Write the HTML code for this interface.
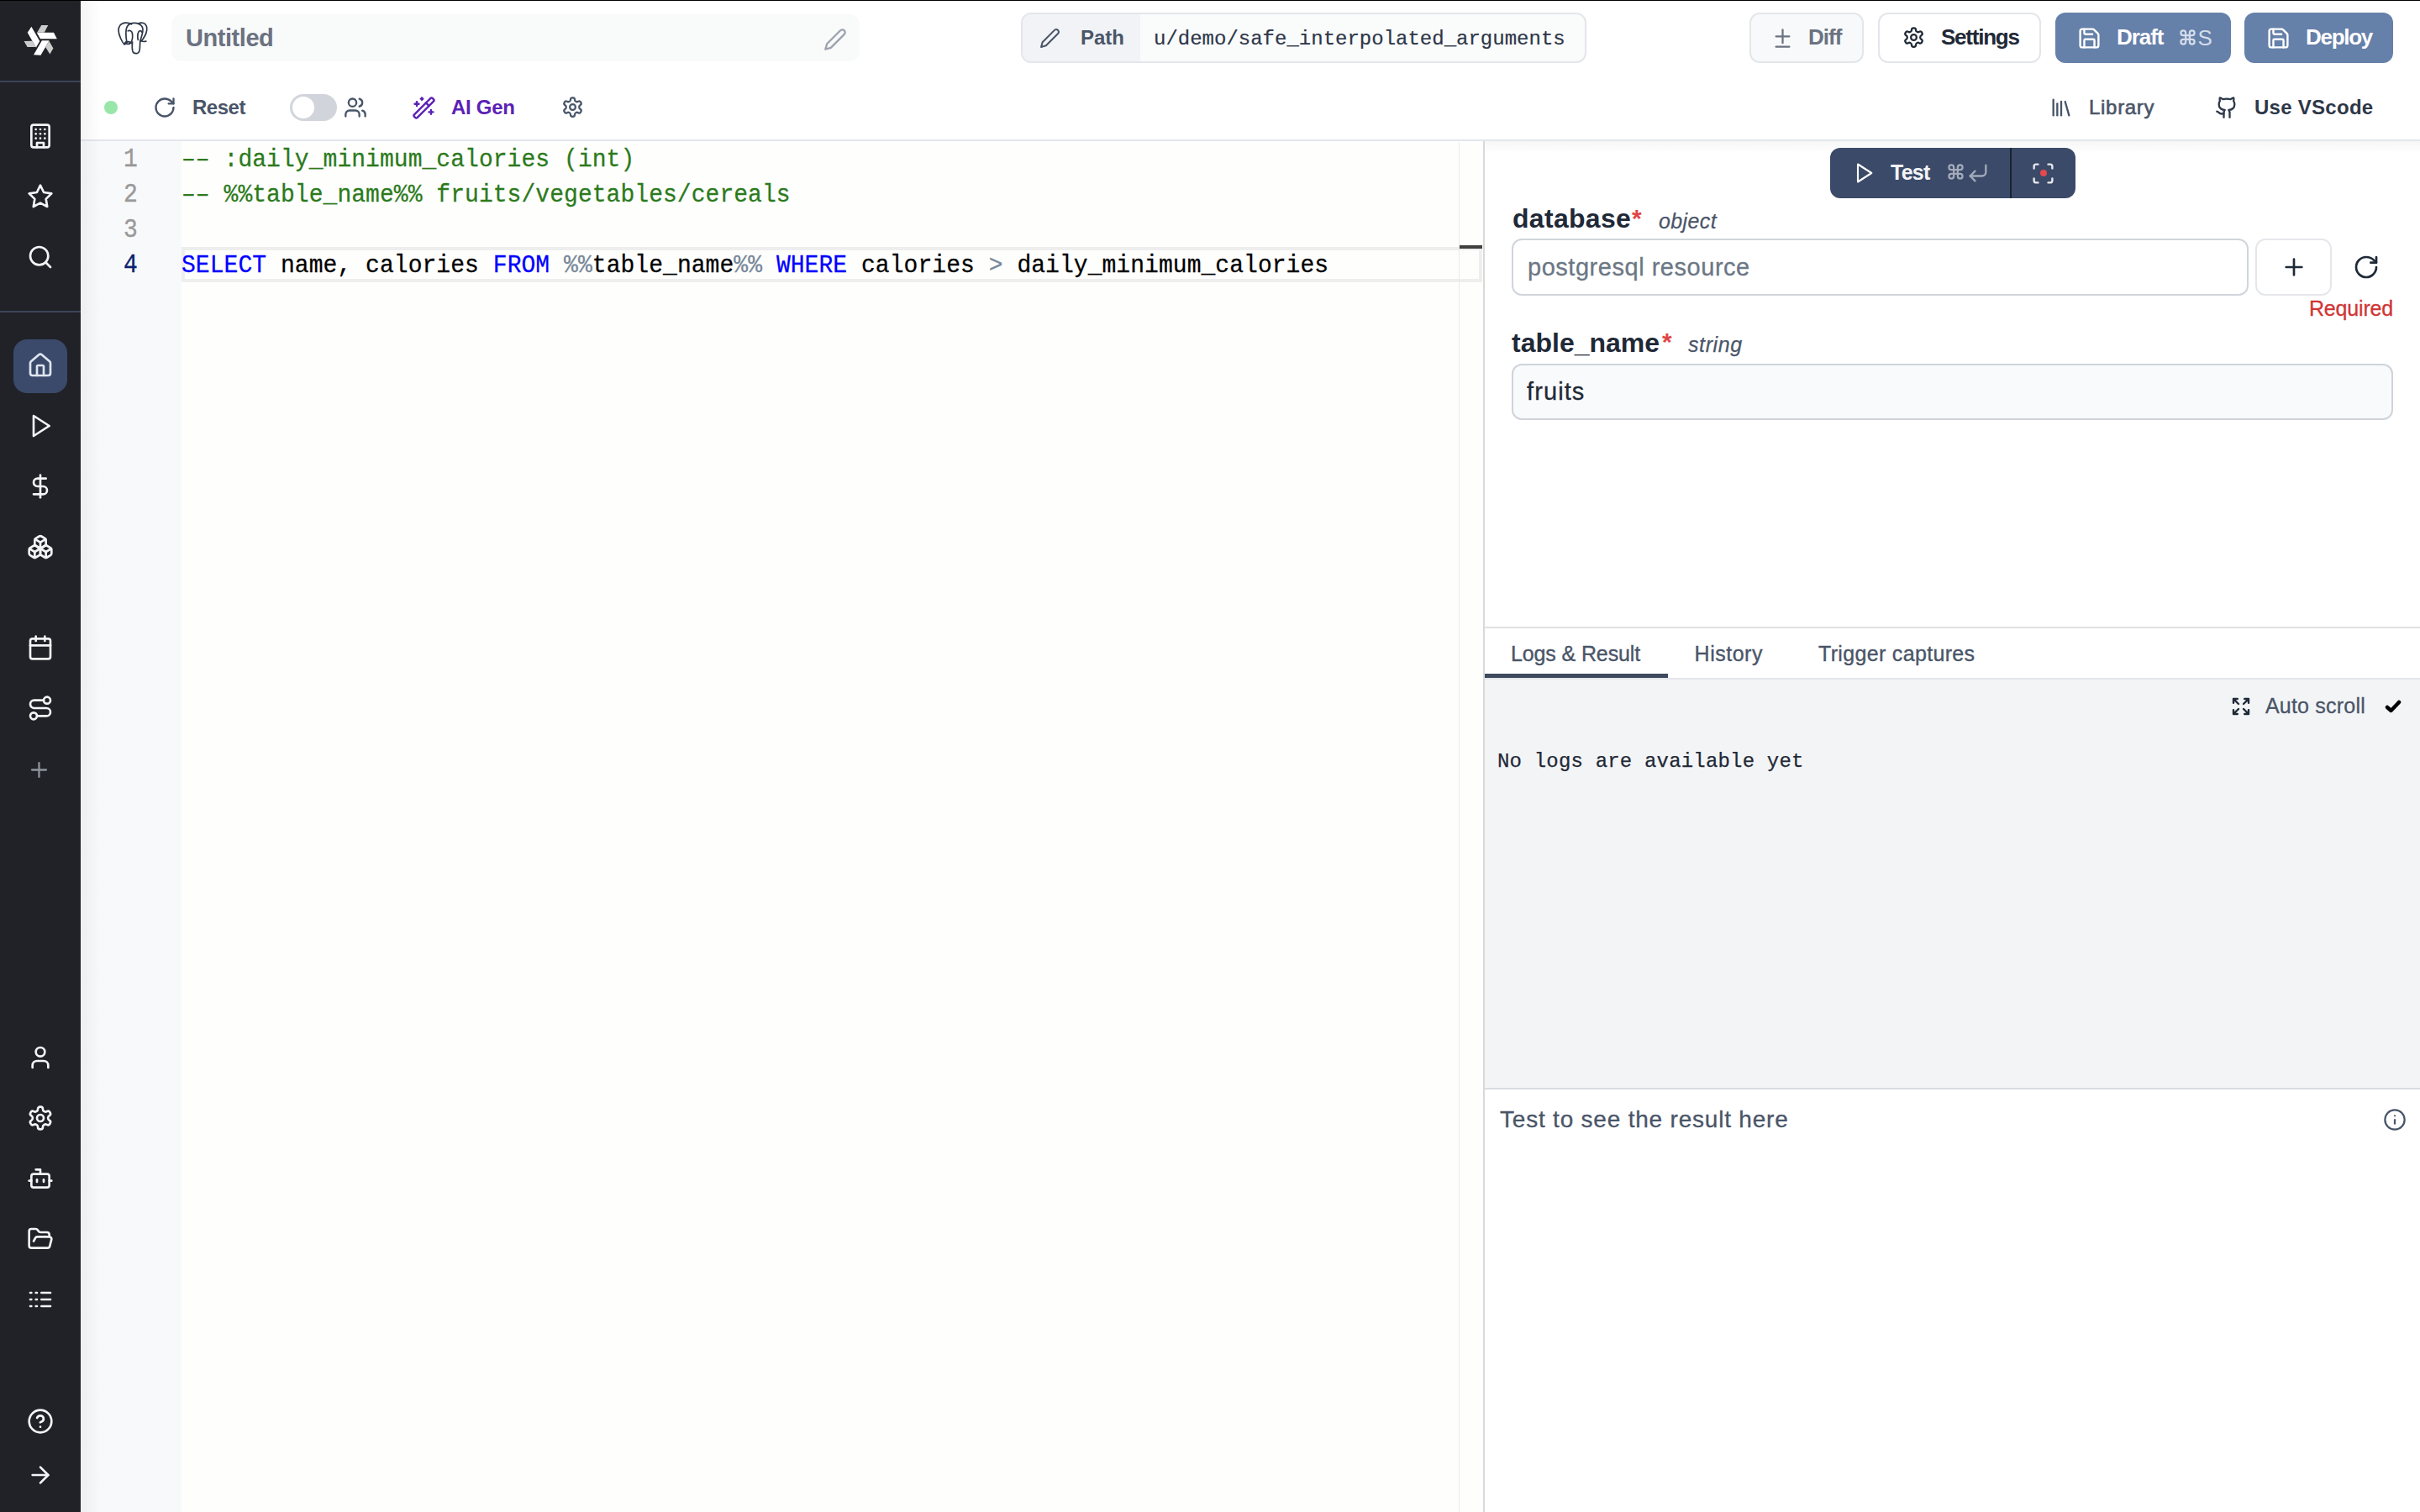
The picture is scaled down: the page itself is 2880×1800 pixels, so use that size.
<!DOCTYPE html>
<html>
<head>
<meta charset="utf-8">
<style>
html,body{margin:0;padding:0;}
body{width:2880px;height:1800px;overflow:hidden;position:relative;background:#ffffff;font-family:"Liberation Sans",sans-serif;}
.a{position:absolute;}
.ic{position:absolute;fill:none;stroke-linecap:round;stroke-linejoin:round;}
.sb .ic{stroke:#f3f4f6;stroke-width:2;}
.t{position:absolute;white-space:nowrap;line-height:1;}
.mono{font-family:"Liberation Mono",monospace;}
</style>
</head>
<body>
<!-- top line -->
<div class="a" style="left:0;top:0;width:2880px;height:1px;background:#000;z-index:10"></div>

<!-- SIDEBAR -->
<div class="a sb" id="sidebar" style="left:0;top:0;width:96px;height:1800px;background:#202227;">
<svg class="a" style="left:0;top:0" width="96" height="96" viewBox="0 0 96 96"><g transform="translate(48.4 47.8)"><g id="blade"><polygon fill="#ffffff" points="-4.7,-9.1 15.6,-9.1 19.4,-1.5 -0.4,-1.5"/><polygon fill="#cccccc" points="-4.2,-9.1 0.8,-17.8 8.9,-17.8 4.3,-9.1"/></g><use href="#blade" transform="rotate(120)"/><use href="#blade" transform="rotate(240)"/></g></svg>
<div class="a" style="left:0;top:96px;width:96px;height:2px;background:#3b4558"></div>
<div class="a" style="left:0;top:370px;width:96px;height:2px;background:#3b4558"></div>
<div class="a" style="left:16px;top:404px;width:64px;height:64px;border-radius:16px;background:#3b4a6b"></div>
<svg class="ic" style="left:32px;top:146px;" width="32" height="32" viewBox="0 0 24 24"><rect width="16" height="20" x="4" y="2" rx="2" ry="2"/><path d="M9 22v-4h6v4"/><path d="M8 6h.01"/><path d="M16 6h.01"/><path d="M12 6h.01"/><path d="M12 10h.01"/><path d="M12 14h.01"/><path d="M16 10h.01"/><path d="M16 14h.01"/><path d="M8 10h.01"/><path d="M8 14h.01"/></svg>
<svg class="ic" style="left:32px;top:218px;" width="32" height="32" viewBox="0 0 24 24"><polygon points="12 2 15.09 8.26 22 9.27 17 14.14 18.18 21.02 12 17.77 5.82 21.02 7 14.14 2 9.27 8.91 8.26 12 2"/></svg>
<svg class="ic" style="left:32px;top:290px;" width="32" height="32" viewBox="0 0 24 24"><circle cx="11" cy="11" r="8"/><path d="m21 21-4.3-4.3"/></svg>
<svg class="ic" style="left:32px;top:419px;stroke:#dfe5ef;" width="32" height="32" viewBox="0 0 24 24"><path d="M15 21v-8a1 1 0 0 0-1-1h-4a1 1 0 0 0-1 1v8"/><path d="M3 10a2 2 0 0 1 .709-1.528l7-5.999a2 2 0 0 1 2.582 0l7 5.999A2 2 0 0 1 21 10v9a2 2 0 0 1-2 2H5a2 2 0 0 1-2-2z"/></svg>
<svg class="ic" style="left:32px;top:491px;" width="32" height="32" viewBox="0 0 24 24"><polygon points="6 3 20 12 6 21 6 3"/></svg>
<svg class="ic" style="left:32px;top:563px;" width="32" height="32" viewBox="0 0 24 24"><line x1="12" x2="12" y1="2" y2="22"/><path d="M17 5H9.5a3.5 3.5 0 0 0 0 7h5a3.5 3.5 0 0 1 0 7H6"/></svg>
<svg class="ic" style="left:32px;top:635px;" width="32" height="32" viewBox="0 0 24 24"><path d="M2.97 12.92A2 2 0 0 0 2 14.63v3.24a2 2 0 0 0 .97 1.71l3 1.8a2 2 0 0 0 2.06 0L12 19v-5.5l-5-3-4.03 2.42Z"/><path d="m7 16.5-4.74-2.85"/><path d="m7 16.5 5-3"/><path d="M7 16.5v5.17"/><path d="M12 13.5V19l3.97 2.38a2 2 0 0 0 2.06 0l3-1.8a2 2 0 0 0 .97-1.71v-3.24a2 2 0 0 0-.97-1.71L17 10.5l-5 3Z"/><path d="m17 16.5-5-3"/><path d="m17 16.5 4.74-2.850"/><path d="M17 16.5v5.17"/><path d="M7.97 4.42A2 2 0 0 0 7 6.13v4.37l5 3 5-3V6.13a2 2 0 0 0-.97-1.710l-3-1.8a2 2 0 0 0-2.06 0l-3 1.8Z"/><path d="M12 8 7.26 5.15"/><path d="m12 8 4.74-2.85"/><path d="M12 13.5V8"/></svg>
<svg class="ic" style="left:32px;top:755px;" width="32" height="32" viewBox="0 0 24 24"><path d="M8 2v4"/><path d="M16 2v4"/><rect width="18" height="18" x="3" y="4" rx="2"/><path d="M3 10h18"/></svg>
<svg class="ic" style="left:32px;top:827px;" width="32" height="32" viewBox="0 0 24 24"><circle cx="6" cy="19" r="3"/><path d="M9 19h8.5a3.5 3.5 0 0 0 0-7h-11a3.5 3.5 0 0 1 0-7H15"/><circle cx="18" cy="5" r="3"/></svg>
<svg class="ic" style="left:31.5px;top:901.5px;stroke:#8e949c;stroke-width:1.9" width="29" height="29" viewBox="0 0 24 24"><path d="M5 12h14"/><path d="M12 5v14"/></svg>
<svg class="ic" style="left:32px;top:1243px;" width="32" height="32" viewBox="0 0 24 24"><path d="M19 21v-2a4 4 0 0 0-4-4H9a4 4 0 0 0-4 4v2"/><circle cx="12" cy="7" r="4"/></svg>
<svg class="ic" style="left:32px;top:1315px;" width="32" height="32" viewBox="0 0 24 24"><path d="M12.22 2h-.44a2 2 0 0 0-2 2v.18a2 2 0 0 1-1 1.73l-.43.25a2 2 0 0 1-2 0l-.15-.08a2 2 0 0 0-2.73.73l-.22.38a2 2 0 0 0 .73 2.73l.15.1a2 2 0 0 1 1 1.72v.51a2 2 0 0 1-1 1.74l-.15.09a2 2 0 0 0-.73 2.73l.22.38a2 2 0 0 0 2.73.73l.15-.08a2 2 0 0 1 2 0l.43.25a2 2 0 0 1 1 1.73V20a2 2 0 0 0 2 2h.44a2 2 0 0 0 2-2v-.18a2 2 0 0 1 1-1.73l.43-.25a2 2 0 0 1 2 0l.15.08a2 2 0 0 0 2.73-.73l.22-.39a2 2 0 0 0-.73-2.73l-.15-.08a2 2 0 0 1-1-1.74v-.5a2 2 0 0 1 1-1.74l.15-.09a2 2 0 0 0 .73-2.73l-.22-.38a2 2 0 0 0-2.73-.73l-.15.08a2 2 0 0 1-2 0l-.43-.25a2 2 0 0 1-1-1.73V4a2 2 0 0 0-2-2z"/><circle cx="12" cy="12" r="3"/></svg>
<svg class="ic" style="left:32px;top:1387px;" width="32" height="32" viewBox="0 0 24 24"><path d="M12 8V4H8"/><rect width="16" height="12" x="4" y="8" rx="2"/><path d="M2 14h2"/><path d="M20 14h2"/><path d="M15 13v2"/><path d="M9 13v2"/></svg>
<svg class="ic" style="left:32px;top:1459px;" width="32" height="32" viewBox="0 0 24 24"><path d="m6 14 1.5-2.9A2 2 0 0 1 9.24 10H20a2 2 0 0 1 1.94 2.5l-1.54 6a2 2 0 0 1-1.950 1.5H4a2 2 0 0 1-2-2V5a2 2 0 0 1 2-2h3.9a2 2 0 0 1 1.69.9l.81 1.2a2 2 0 0 0 1.67.9H18a2 2 0 0 1 2 2v2"/></svg>
<svg class="ic" style="left:32px;top:1531px;" width="32" height="32" viewBox="0 0 24 24"><path d="M13 12h8"/><path d="M13 18h8"/><path d="M13 6h8"/><path d="M3 12h1"/><path d="M3 18h1"/><path d="M3 6h1"/><path d="M8 12h1"/><path d="M8 18h1"/><path d="M8 6h1"/></svg>
<svg class="ic" style="left:32px;top:1676px;" width="32" height="32" viewBox="0 0 24 24"><circle cx="12" cy="12" r="10"/><path d="M9.09 9a3 3 0 0 1 5.83 1c0 2-3 3-3 3"/><path d="M12 17h.01"/></svg>
<svg class="ic" style="left:32px;top:1740px;" width="32" height="32" viewBox="0 0 24 24"><path d="M5 12h14"/><path d="m12 5 7 7-7 7"/></svg>
</div>

<!-- main shadow -->
<div class="a" style="left:96px;top:1px;width:24px;height:1799px;background:linear-gradient(to right,rgba(0,0,0,0.045),rgba(0,0,0,0));z-index:3"></div>

<!-- HEADER -->

<div id="header">
<!-- elephant -->
<svg id="i_eleph" class="ic" style="left:138px;top:24px;stroke:#2d3748;stroke-width:1.7" width="40" height="42" viewBox="138 24 40 42">
 <path d="M156.5 28.8 C153 26.5 146 26.2 143 30 C140.3 33.5 141 40 143.5 45.5 C145 49 146.5 51.5 148 52.8 C149.5 52.5 150.8 51.2 151.5 50.2"/>
 <path d="M150.8 50 C150 45 149.5 39 150.3 34.5 C151.3 29.5 155.5 27.5 159.5 27.4 C163.5 27.3 166.8 28.8 168.8 31.2 C170.3 33.5 170.3 37.5 169 41.5 C168 44.5 167.2 47 167 49.5"/>
 <path d="M157.6 50 C157.2 54 157.2 58.5 157.9 61 C158.6 63.3 161 63.8 162.8 63.6 C165 63.3 166 61.5 166.3 58.5 C166.6 55 166.5 51 167 48"/>
 <path d="M165.3 27.6 C169.5 26.3 173 27.8 174.3 31 C175.3 34 174.6 38.5 172.5 42.5 C171 45.5 169.5 47.5 168 48.8 C169.8 49.8 172 49.6 173.8 49.2"/>
 <path d="M152.3 36.8 C154.5 35.8 156.8 36.6 157.4 39.5 C158 43 157.5 47.5 156.2 50 C155 52.2 152.6 52.8 150.5 52 C149.5 51.5 149.3 50.5 150.3 50"/>
 <path d="M164.3 47.5 C163.6 44 163.8 40 165 37.8 C166.2 36 168.3 36.3 169 38.5"/>
 <path d="M148 52.5 C148.5 51 150.5 49.5 152.8 49.6 C154.5 49.8 155.8 50.6 156.5 51.5"/>
</svg>
<!-- title input -->
<div class="a" style="left:204px;top:17px;width:819px;height:56px;border-radius:12px;background:#f9fafa"></div>
<div class="t" id="untitled" style="left:221px;top:31.4px;font-size:29px;font-weight:700;color:#6b7280;letter-spacing:-0.45px">Untitled</div>
<svg id="i_tpen" class="ic" style="left:980px;top:33px;stroke:#9ca3af;stroke-width:2" width="28" height="28" viewBox="0 0 24 24"><path d="M17 3a2.85 2.83 0 1 1 4 4L7.5 20.5 2 22l1.5-5.5Z"/></svg>

<!-- path group -->
<div class="a" style="left:1215px;top:15px;width:669px;height:56px;border:2px solid #e3e6ea;border-radius:12px;background:#fafbfb;overflow:hidden">
  <div class="a" style="left:0;top:0;width:140px;height:56px;background:#f2f3f6"></div>
</div>
<svg id="i_ppen" class="ic" style="left:1236.6px;top:32.9px;stroke:#4a5568;stroke-width:2" width="25" height="25" viewBox="0 0 24 24"><path d="M17 3a2.85 2.83 0 1 1 4 4L7.5 20.5 2 22l1.5-5.5Z"/></svg>
<div class="t" id="pathlbl" style="left:1286px;top:32.5px;font-size:24px;font-weight:700;color:#4a5568">Path</div>
<div class="t mono" id="pathval" style="left:1373px;top:34.5px;font-size:24px;color:#2d3748;-webkit-text-stroke:0.2px #2d3748">u/demo/safe_interpolated_arguments</div>

<!-- Diff -->
<div class="a" style="left:2082px;top:15px;width:132px;height:56px;border:2px solid #e3e6ea;border-radius:12px;background:#f8f9fb"></div>
<svg id="i_diff" class="ic" style="left:2108px;top:31.6px;stroke:#6b7280;stroke-width:2" width="27" height="27" viewBox="0 0 24 24"><path d="M12 3v14"/><path d="M5 10h14"/><path d="M5 21h14"/></svg>
<div class="t" id="difft" style="left:2152px;top:31.2px;font-size:26px;font-weight:700;color:#6b7280;letter-spacing:-1px">Diff</div>

<!-- Settings -->
<div class="a" style="left:2235px;top:15px;width:190px;height:56px;border:2px solid #e3e6ea;border-radius:12px;background:#ffffff"></div>
<svg id="i_set" class="ic" style="left:2263.7px;top:30.9px;stroke:#1f2937;stroke-width:2" width="27" height="27" viewBox="0 0 24 24"><path d="M12.22 2h-.44a2 2 0 0 0-2 2v.18a2 2 0 0 1-1 1.73l-.43.25a2 2 0 0 1-2 0l-.15-.08a2 2 0 0 0-2.730.73l-.22.38a2 2 0 0 0 .73 2.73l.15.1a2 2 0 0 1 1 1.72v.51a2 2 0 0 1-1 1.74l-.15.09a2 2 0 0 0-.73 2.73l.22.38a2 2 0 0 0 2.73.73l.15-.08a2 2 0 0 1 2 0l.43.25a2 2 0 0 1 1 1.73V20a2 2 0 0 0 2 2h.44a2 2 0 0 0 2-2v-.18a2 2 0 0 1 1-1.73l.43-.25a2 2 0 0 1 2 0l.15.08a2 2 0 0 0 2.73-.73l.22-.39a2 2 0 0 0-.73-2.73l-.15-.08a2 2 0 0 1-1-1.74v-.5a2 2 0 0 1 1-1.74l.15-.09a2 2 0 0 0 .73-2.73l-.22-.38a2 2 0 0 0-2.73-.73l-.15.08a2 2 0 0 1-2 0l-.43-.25a2 2 0 0 1-1-1.73V4a2 2 0 0 0-2-2z"/><circle cx="12" cy="12" r="3"/></svg>
<div class="t" id="settingst" style="left:2310px;top:31.2px;font-size:26px;font-weight:700;color:#1f2937;letter-spacing:-1.24px">Settings</div>

<!-- Draft -->
<div class="a" style="left:2446px;top:15px;width:209px;height:60px;border-radius:12px;background:#6580a9"></div>
<svg id="i_save1" class="ic" style="left:2471.6px;top:30.9px;stroke:#ffffff;stroke-width:2" width="29" height="29" viewBox="0 0 24 24"><path d="M15.2 3a2 2 0 0 1 1.4.6l3.8 3.8a2 2 0 0 1 .6 1.4V19a2 2 0 0 1-2 2H5a2 2 0 0 1-2-2V5a2 2 0 0 1 2-2z"/><path d="M17 21v-7a1 1 0 0 0-1-1H8a1 1 0 0 0-1 1v7"/><path d="M7 3v4a1 1 0 0 0 1 1h7"/></svg>
<div class="t" id="draftt" style="left:2519px;top:31.2px;font-size:26px;font-weight:700;color:#ffffff;letter-spacing:-1.05px">Draft</div>
<svg id="i_cmd1" class="ic" style="left:2593.6px;top:34.5px;stroke:#d3dcea;stroke-width:2.4" width="19" height="19" viewBox="0 0 20 20"><path d="M7.5 7.5V4.5A3 3 0 1 0 4.5 7.5H15.5A3 3 0 1 0 12.5 4.5V15.5A3 3 0 1 0 15.5 12.5H4.5A3 3 0 1 0 7.5 15.5Z"/></svg><div class="t" id="drafts" style="left:2615.4px;top:31.8px;font-size:26px;color:#d3dcea">S</div>

<!-- Deploy -->
<div class="a" style="left:2671px;top:15px;width:177px;height:60px;border-radius:12px;background:#6580a9"></div>
<svg id="i_save2" class="ic" style="left:2696.6px;top:30.9px;stroke:#ffffff;stroke-width:2" width="29" height="29" viewBox="0 0 24 24"><path d="M15.2 3a2 2 0 0 1 1.4.6l3.8 3.8a2 2 0 0 1 .6 1.4V19a2 2 0 0 1-2 2H5a2 2 0 0 1-2-2V5a2 2 0 0 1 2-2z"/><path d="M17 21v-7a1 1 0 0 0-1-1H8a1 1 0 0 0-1 1v7"/><path d="M7 3v4a1 1 0 0 0 1 1h7"/></svg>
<div class="t" id="deployt" style="left:2744px;top:31.2px;font-size:26px;font-weight:700;color:#ffffff;letter-spacing:-1.3px">Deploy</div>

<!-- row 2 -->
<div class="a" style="left:124px;top:120px;width:16px;height:16px;border-radius:50%;background:#99e6a9"></div>
<svg id="i_reset" class="ic" style="left:182px;top:113.6px;stroke:#475569;stroke-width:2" width="28" height="28" viewBox="0 0 24 24"><path d="M21 12a9 9 0 1 1-9-9c2.52 0 4.93 1 6.74 2.740L21 8"/><path d="M21 3v5h-5"/></svg>
<div class="t" id="resett" style="left:229px;top:115.7px;font-size:24px;font-weight:700;color:#4a5568;letter-spacing:-0.5px">Reset</div>
<div class="a" style="left:345px;top:112px;width:56px;height:32px;border-radius:16px;background:#d1d5db"></div>
<div class="a" style="left:348px;top:115px;width:26px;height:26px;border-radius:50%;background:#ffffff"></div>
<svg id="i_users" class="ic" style="left:408.8px;top:114.2px;stroke:#475569;stroke-width:2" width="28" height="28" viewBox="0 0 24 24"><path d="M16 21v-2a4 4 0 0 0-4-4H6a4 4 0 0 0-4 4v2"/><circle cx="9" cy="7" r="4"/><path d="M22 21v-2a4 4 0 0 0-3-3.87"/><path d="M16 3.13a4 4 0 0 1 0 7.75"/></svg>
<svg id="i_wand" class="ic" style="left:490.2px;top:113.6px;stroke:#5b21b6;stroke-width:2" width="29" height="29" viewBox="0 0 24 24"><path d="m21.64 3.64-1.28-1.28a1.21 1.21 0 0 0-1.72 0L2.36 18.64a1.21 1.21 0 0 0 0 1.72l1.28 1.28a1.2 1.2 0 0 0 1.72 0L21.64 5.36a1.2 1.2 0 0 0 0-1.72Z"/><path d="m14 7 3 3"/><path d="M5 6v4"/><path d="M19 14v4"/><path d="M10 2v2"/><path d="M7 8H3"/><path d="M21 16h-4"/><path d="M11 3H9"/></svg>
<div class="t" id="aigent" style="left:537px;top:115.7px;font-size:24px;font-weight:700;color:#5b21b6;letter-spacing:-0.3px">AI Gen</div>
<svg id="i_gear2" class="ic" style="left:667.7px;top:113.7px;stroke:#475569;stroke-width:2" width="27" height="27" viewBox="0 0 24 24"><path d="M12.22 2h-.44a2 2 0 0 0-2 2v.18a2 2 0 0 1-1 1.73l-.43.25a2 2 0 0 1-2 0l-.15-.08a2 2 0 0 0-2.730.73l-.22.38a2 2 0 0 0 .73 2.73l.15.1a2 2 0 0 1 1 1.72v.51a2 2 0 0 1-1 1.74l-.15.09a2 2 0 0 0-.73 2.73l.22.38a2 2 0 0 0 2.73.73l.15-.08a2 2 0 0 1 2 0l.43.25a2 2 0 0 1 1 1.73V20a2 2 0 0 0 2 2h.44a2 2 0 0 0 2-2v-.18a2 2 0 0 1 1-1.73l.43-.25a2 2 0 0 1 2 0l.15.08a2 2 0 0 0 2.73-.73l.22-.39a2 2 0 0 0-.73-2.73l-.15-.08a2 2 0 0 1-1-1.74v-.5a2 2 0 0 1 1-1.74l.15-.09a2 2 0 0 0 .73-2.73l-.22-.38a2 2 0 0 0-2.73-.73l-.15.08a2 2 0 0 1-2 0l-.43-.25a2 2 0 0 1-1-1.73V4a2 2 0 0 0-2-2z"/><circle cx="12" cy="12" r="3"/></svg>

<svg id="i_lib" class="ic" style="left:2438.5px;top:114.2px;stroke:#475569;stroke-width:2" width="28" height="28" viewBox="0 0 24 24"><path d="m16 6 4 14"/><path d="M12 6v14"/><path d="M8 8v12"/><path d="M4 4v16"/></svg>
<div class="t" id="libt" style="left:2486px;top:115.6px;font-size:24px;color:#4a5568;letter-spacing:0.7px;-webkit-text-stroke:0.6px #4a5568">Library</div>
<svg id="i_gh" class="ic" style="left:2636.1px;top:113.8px;stroke:#2d3748;stroke-width:2" width="28" height="28" viewBox="0 0 24 24"><path d="M15 22v-4a4.8 4.8 0 0 0-1-3.5c3 0 6-2 6-5.5.08-1.25-.27-2.48-1-3.5.28-1.15.28-2.35 0-3.5 0 0-1 0-3 1.5-2.64-.5-5.36-.5-8 0C6 2 5 2 5 2c-.3 1.15-.3 2.35 0 3.5A5.403 5.403 0 0 0 4 9c0 3.5 3 5.5 6 5.5-.39.49-.68 1.05-.85 1.65-.17.6-.22 1.23-.15 1.85v4"/><path d="M9 18c-4.51 2-5-2-7-2"/></svg>
<div class="t" id="vscodet" style="left:2683px;top:115.7px;font-size:24px;font-weight:700;color:#2d3748;letter-spacing:0.27px">Use VScode</div>
</div>


<!-- header bottom border -->
<div class="a" style="left:96px;top:166px;width:2784px;height:2px;background:#e3e6eb"></div>

<!-- EDITOR -->
<div id="editor" class="a" style="left:96px;top:168px;width:1669px;height:1632px;background:#fefefd;">
  <div class="a" style="left:0;top:0;width:120px;height:1632px;background:#f8f9fb"></div>
  <div class="a" style="left:120px;top:126px;width:1548px;height:42px;box-sizing:border-box;border:4px solid #eeeeee"></div>
  <div class="a" style="left:1640px;top:1px;width:1px;height:1631px;background:#ebebeb"></div>
  <div class="a" style="left:1641px;top:124px;width:27px;height:4px;background:#404040"></div>
</div>
<div class="t mono" id="ln1" style="left:147px;top:177px;font-size:28px;color:#999999;transform:scaleY(1.1);transform-origin:0 21.5px;-webkit-text-stroke:0.3px #999999">1</div>
<div class="t mono" id="ln2" style="left:147px;top:219px;font-size:28px;color:#999999;transform:scaleY(1.1);transform-origin:0 21.5px;-webkit-text-stroke:0.3px #999999">2</div>
<div class="t mono" id="ln3" style="left:147px;top:261px;font-size:28px;color:#999999;transform:scaleY(1.1);transform-origin:0 21.5px;-webkit-text-stroke:0.3px #999999">3</div>
<div class="t mono" id="ln4" style="left:147px;top:303px;font-size:28px;color:#0b216f;transform:scaleY(1.1);transform-origin:0 21.5px;-webkit-text-stroke:0.3px #0b216f">4</div>
<div class="t mono" id="code1" style="left:216px;top:177px;font-size:28px;color:#2b7a1b;letter-spacing:0.05px;transform:scaleY(1.07);transform-origin:0 21.5px;-webkit-text-stroke:0.25px #2b7a1b">&#8211;&#8211; :daily_minimum_calories (int)</div>
<div class="t mono" id="code2" style="left:216px;top:219px;font-size:28px;color:#2b7a1b;letter-spacing:0.05px;transform:scaleY(1.07);transform-origin:0 21.5px;-webkit-text-stroke:0.25px #2b7a1b">&#8211;&#8211; %%table_name%% fruits/vegetables/cereals</div>
<div class="t mono" id="code4" style="left:216px;top:303px;font-size:28px;color:#000000;letter-spacing:0.05px;transform:scaleY(1.07);transform-origin:0 21.5px;-webkit-text-stroke:0.25px"><span style="color:#0000ff">SELECT</span> name, calories <span style="color:#0000ff">FROM</span> <span style="color:#778899">%%</span>table_name<span style="color:#778899">%%</span> <span style="color:#0000ff">WHERE</span> calories <span style="color:#778899">&gt;</span> daily_minimum_calories</div>

<!-- divider -->
<div class="a" style="left:1765px;top:168px;width:2px;height:1632px;background:#d9d9d9"></div>

<!-- RIGHT PANEL -->
<div id="right">
<div class="a" style="left:1767px;top:168px;width:1113px;height:14px;background:linear-gradient(to bottom,rgba(0,0,0,0.035),rgba(0,0,0,0))"></div>
<!-- test button -->
<div class="a" style="left:2178px;top:176px;width:292px;height:60px;border-radius:12px;background:#3b4a68"></div>
<div class="a" style="left:2392px;top:176px;width:2px;height:60px;background:#1b2230"></div>
<svg id="i_play" class="ic" style="left:2203.8px;top:192.1px;stroke:#ffffff;stroke-width:1.8" width="28" height="28" viewBox="0 0 24 24"><polygon points="6 3 20 12 6 21 6 3"/></svg>
<div class="t" id="testt" style="left:2250px;top:192.8px;font-size:25px;font-weight:700;color:#f3f4f6;letter-spacing:-0.73px">Test</div>
<svg id="i_cmd2" class="ic" style="left:2317.7px;top:195.4px;stroke:#a3abba;stroke-width:2.4" width="19" height="19" viewBox="0 0 20 20"><path d="M7.5 7.5V4.5A3 3 0 1 0 4.5 7.5H15.5A3 3 0 1 0 12.5 4.5V15.5A3 3 0 1 0 15.5 12.5H4.5A3 3 0 1 0 7.5 15.5Z"/></svg><svg id="i_enter" class="ic" style="left:2340.3px;top:191.9px;stroke:#a3abba;stroke-width:2" width="28" height="28" viewBox="0 0 24 24"><polyline points="9 10 4 15 9 20"/><path d="M20 4v7a4 4 0 0 1-4 4H4"/></svg>
<svg id="i_scan" class="ic" style="left:2417.4px;top:191.6px;stroke:#e5e7eb;stroke-width:2" width="29" height="29" viewBox="0 0 24 24"><path d="M3 7V5a2 2 0 0 1 2-2h2"/><path d="M17 3h2a2 2 0 0 1 2 2v2"/><path d="M21 17v2a2 2 0 0 1-2 2h-2"/><path d="M7 21H5a2 2 0 0 1-2-2v-2"/></svg>
<div class="a" style="left:2428px;top:202px;width:8px;height:8px;border-radius:50%;background:#e5484d"></div>

<!-- database -->
<div class="t" id="dbl" style="left:1800px;top:244px;font-size:32px;font-weight:700;color:#1f2937;letter-spacing:0.3px">database</div>
<div class="t" id="dbs" style="left:1942px;top:245px;font-size:30px;font-weight:700;color:#e04545">*</div>
<div class="t" id="dbo" style="left:1974px;top:251px;font-size:25px;font-style:italic;color:#4a5568;letter-spacing:0.4px;-webkit-text-stroke:0.25px #4a5568">object</div>
<div class="a" style="left:1799px;top:284px;width:873px;height:64px;border:2px solid #d1d5db;border-radius:12px;background:#ffffff"></div>
<div class="t" id="dbph" style="left:1818px;top:304.3px;font-size:29px;color:#6b7785;letter-spacing:0.53px;-webkit-text-stroke:0.3px #6b7785">postgresql resource</div>
<div class="a" style="left:2684px;top:284px;width:87px;height:64px;border:2px solid #e5e7eb;border-radius:12px;background:#ffffff"></div>
<svg id="i_plus" class="ic" style="left:2713.7px;top:302.2px;stroke:#1f2937;stroke-width:2" width="32" height="32" viewBox="0 0 24 24"><path d="M5 12h14"/><path d="M12 5v14"/></svg>
<svg id="i_refresh" class="ic" style="left:2800px;top:302px;stroke:#1f2937;stroke-width:2" width="32" height="32" viewBox="0 0 24 24"><path d="M21 12a9 9 0 1 1-9-9c2.52 0 4.93 1 6.740 2.74L21 8"/><path d="M21 3v5h-5"/></svg>
<div class="t" id="req" style="left:2748px;top:354.8px;font-size:25px;color:#d03535;letter-spacing:-0.18px;-webkit-text-stroke:0.3px #d03535">Required</div>

<!-- table_name -->
<div class="t" id="tnl" style="left:1799px;top:392.3px;font-size:32px;font-weight:700;color:#1f2937">table_name</div>
<div class="t" id="tns" style="left:1978px;top:392px;font-size:30px;font-weight:700;color:#e04545">*</div>
<div class="t" id="tno" style="left:2009px;top:398px;font-size:25px;font-style:italic;color:#4a5568;letter-spacing:0.6px;-webkit-text-stroke:0.25px #4a5568">string</div>
<div class="a" style="left:1799px;top:433px;width:1045px;height:63px;border:2px solid #cfd4da;border-radius:12px;background:#f9fafb"></div>
<div class="t" id="fruits" style="left:1817px;top:451.8px;font-size:29px;color:#1f2937;letter-spacing:1.1px;-webkit-text-stroke:0.3px #1f2937">fruits</div>

<!-- tabs -->
<div class="a" style="left:1767px;top:746px;width:1113px;height:2px;background:#e0e0e0"></div>
<div class="t" id="tab1" style="left:1798px;top:766.3px;font-size:25px;color:#4a5568;-webkit-text-stroke:0.35px #4a5568;letter-spacing:-0.12px">Logs &amp; Result</div>
<div class="t" id="tab2" style="left:2016.6px;top:766.3px;font-size:25px;color:#4a5568;letter-spacing:0.5px;-webkit-text-stroke:0.35px #4a5568">History</div>
<div class="t" id="tab3" style="left:2164px;top:766.3px;font-size:25px;color:#4a5568;letter-spacing:0.33px;-webkit-text-stroke:0.35px #4a5568">Trigger captures</div>
<div class="a" style="left:1767px;top:807px;width:1113px;height:2px;background:#e3e6ea"></div>
<div class="a" style="left:1767px;top:802px;width:218px;height:5px;background:#3d4a5e"></div>
<div class="a" style="left:1767px;top:809px;width:1113px;height:486px;background:#f3f4f6"></div>
<svg id="i_expand" class="ic" style="left:2655px;top:829px;stroke:#1f2937;stroke-width:2.4" width="24" height="24" viewBox="0 0 24 24"><path d="m21 21-6-6m6 6v-4.8m0 4.8h-4.8"/><path d="M3 16.2V21m0 0h4.8M3 21l6-6"/><path d="M21 7.8V3m0 0h-4.8M21 3l-6 6"/><path d="M3 7.8V3m0 0h4.8M3 3l6 6"/></svg>
<div class="t" id="autos" style="left:2696px;top:828.4px;font-size:25px;color:#4a5568;letter-spacing:0.2px;-webkit-text-stroke:0.3px #4a5568">Auto scroll</div>
<svg id="i_check" class="ic" style="left:2838px;top:832px;stroke:#000000;stroke-width:4.5" width="20" height="18" viewBox="0 0 20 18"><path d="M3 10 L7.5 14 L17 4"/></svg>
<div class="t mono" id="nologs" style="left:1782px;top:894.5px;font-size:24px;color:#1f2937;letter-spacing:0.18px;-webkit-text-stroke:0.25px #1f2937">No logs are available yet</div>
<div class="a" style="left:1767px;top:1295px;width:1113px;height:2px;background:#d9dce1"></div>
<div class="t" id="testsee" style="left:1785px;top:1319px;font-size:28px;color:#4a5568;letter-spacing:0.79px;-webkit-text-stroke:0.3px #4a5568">Test to see the result here</div>
<svg id="i_info" class="ic" style="left:2836.4px;top:1318.8px;stroke:#475569;stroke-width:1.9" width="28" height="28" viewBox="0 0 24 24"><circle cx="12" cy="12" r="10"/><path d="M12 16v-4"/><path d="M12 8h.01"/></svg>
</div>

</body>
</html>
